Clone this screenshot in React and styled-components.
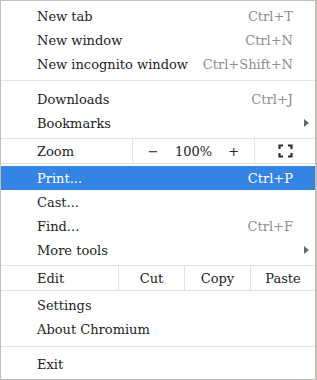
import React from "react";
import styled, { createGlobalStyle } from "styled-components";

const GlobalStyle = createGlobalStyle`
  html, body {
    margin: 0;
    padding: 0;
    background: #ffffff;
  }
`;

const Menu = styled.div`
  width: 317px;
  height: 380px;
  box-sizing: border-box;
  border: 1px solid #c3beb8;
  border-right-width: 2px;
  background: #ffffff;
  display: flex;
  flex-direction: column;
  font-family: "DejaVu Serif", "Liberation Serif", serif;
  font-size: 13px;
  color: #232323;
`;

const Group = styled.div`
  padding: ${(p) => p.$pad || "4px 0"};
`;

const Divider = styled.div`
  height: 1px;
  background: #e2e2e2;
`;

const Item = styled.div`
  height: 24px;
  display: flex;
  align-items: center;
  padding: 0 6px 0 36px;
  background: ${(p) => (p.$active ? "#3584e4" : "transparent")};
  color: ${(p) => (p.$active ? "#ffffff" : "inherit")};
`;

const Label = styled.span`
  flex: 1;
  white-space: nowrap;
`;

const Shortcut = styled.span`
  margin-right: 16px;
  color: ${(p) => (p.$active ? "#ffffff" : "#8d8d8d")};
  white-space: nowrap;
`;

const Arrow = styled.svg`
  width: 5px;
  height: 8px;
  display: block;
`;

const ButtonRow = styled.div`
  display: grid;
  grid-template-columns: ${(p) => p.$cols};
  height: 24px;
  border-top: 1px solid #e2e2e2;
  border-bottom: 1px solid #e2e2e2;
`;

const RowLabel = styled.div`
  display: flex;
  align-items: center;
  padding-left: 36px;
`;

const Cell = styled.div`
  display: flex;
  align-items: center;
  justify-content: center;
  border-left: 1px solid #e2e2e2;
`;

const ZoomControls = styled(Cell)`
  display: grid;
  grid-template-columns: repeat(3, 1fr);
  justify-items: center;
  align-items: center;
`;

const FullscreenIcon = () => (
  <svg width="15" height="14" viewBox="0 0 15 14" fill="none">
    <path
      d="M1.5 5V1.5h3.5M10 1.5h3.5V5M13.5 9v3.5H10M5 12.5H1.5V9"
      stroke="#2e2e2e"
      strokeWidth="2.2"
      strokeLinecap="butt"
    />
  </svg>
);

const SubArrow = () => (
  <Arrow viewBox="0 0 5 8">
    <polygon points="0,0 5,4 0,8" fill="#6a6a6a" />
  </Arrow>
);

const MenuItem = ({ label, shortcut, active, submenu }) => (
  <Item $active={active}>
    <Label>{label}</Label>
    {shortcut && <Shortcut $active={active}>{shortcut}</Shortcut>}
    {submenu && <SubArrow />}
  </Item>
);

export default function App() {
  return (
    <>
      <GlobalStyle />
      <Menu>
        <Group $pad="3px 0 4px">
          <MenuItem label="New tab" shortcut="Ctrl+T" />
          <MenuItem label="New window" shortcut="Ctrl+N" />
          <MenuItem label="New incognito window" shortcut="Ctrl+Shift+N" />
        </Group>
        <Divider />
        <Group $pad="6px 0 3px">
          <MenuItem label="Downloads" shortcut="Ctrl+J" />
          <MenuItem label="Bookmarks" submenu />
        </Group>
        <ButtonRow $cols="131px 122px 1fr">
          <RowLabel>Zoom</RowLabel>
          <ZoomControls>
            <span>−</span>
            <span>100%</span>
            <span>+</span>
          </ZoomControls>
          <Cell>
            <FullscreenIcon />
          </Cell>
        </ButtonRow>
        <Group $pad="2px 0 3px">
          <MenuItem label="Print..." shortcut="Ctrl+P" active />
          <MenuItem label="Cast..." />
          <MenuItem label="Find..." shortcut="Ctrl+F" />
          <MenuItem label="More tools" submenu />
        </Group>
        <ButtonRow $cols="117px 66px 66px 1fr">
          <RowLabel>Edit</RowLabel>
          <Cell>Cut</Cell>
          <Cell>Copy</Cell>
          <Cell>Paste</Cell>
        </ButtonRow>
        <Group $pad="2px 0 5px">
          <MenuItem label="Settings" />
          <MenuItem label="About Chromium" />
        </Group>
        <Divider />
        <Group $pad="5px 0 3px">
          <MenuItem label="Exit" />
        </Group>
      </Menu>
    </>
  );
}
